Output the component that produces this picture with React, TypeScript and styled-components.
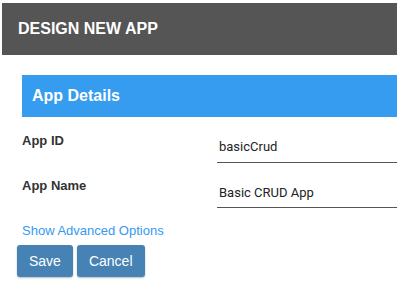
import styled, { createGlobalStyle } from "styled-components";

const GlobalStyle = createGlobalStyle`
  html, body {
    margin: 0;
    padding: 0;
    background: #ffffff;
    font-family: "Liberation Sans", Arial, sans-serif;
  }
  * {
    box-sizing: border-box;
  }
`;

const Page = styled.div`
  padding: 3px 0 8px 2px;
`;

const TopBar = styled.header`
  height: 52px;
  background-color: #555555;
  display: flex;
  align-items: center;
  padding-left: 16px;

  & h1 {
    margin: 0;
    font-size: 16px;
    font-weight: bold;
    color: #ffffff;
  }
`;

const Content = styled.main`
  padding: 20px 0 0 20px;
`;

const SectionBar = styled.div`
  height: 42px;
  background-color: #359cf0;
  display: flex;
  align-items: center;
  padding-left: 10px;
  margin-bottom: 13px;

  & h2 {
    margin: 0;
    font-size: 16px;
    font-weight: bold;
    color: #ffffff;
  }
`;

const FieldRow = styled.div`
  display: flex;
  align-items: flex-start;
  height: 45px;
`;

const FieldLabel = styled.label`
  width: 195px;
  padding-top: 3px;
  font-size: 13px;
  font-weight: bold;
  color: #333333;
`;

const TextInput = styled.input<{ $offset?: number }>`
  width: 180px;
  margin-top: ${(p) => 5 + (p.$offset ?? 0)}px;
  padding: 4px 2px ${(p) => 8 - (p.$offset ?? 0)}px;
  border: none;
  border-bottom: 1px solid #555555;
  outline: none;
  font-family: Roboto, "Liberation Sans", sans-serif;
  font-size: 13px;
  color: #222222;
  background: transparent;
`;

const AdvancedLink = styled.a`
  display: block;
  margin-top: 3px;
  font-size: 13px;
  color: #3399f3;
  text-decoration: none;
  cursor: pointer;
`;

const Actions = styled.div`
  display: flex;
  gap: 4px;
  margin: 7px 0 0 -5px;
`;

const Button = styled.button`
  height: 32px;
  padding: 0 12px;
  border: none;
  border-radius: 3px;
  background-color: #4682b4;
  color: #ffffff;
  font-family: "Liberation Sans", Arial, sans-serif;
  font-size: 14px;
  box-shadow: 0 1px 2px rgba(0, 0, 0, 0.25);
  cursor: pointer;
`;

export default function App() {
  return (
    <>
      <GlobalStyle />
      <Page>
        <TopBar>
          <h1>DESIGN NEW APP</h1>
        </TopBar>
        <Content>
          <SectionBar>
            <h2>App Details</h2>
          </SectionBar>
          <FieldRow>
            <FieldLabel>App ID</FieldLabel>
            <TextInput defaultValue="basicCrud" />
          </FieldRow>
          <FieldRow>
            <FieldLabel>App Name</FieldLabel>
            <TextInput defaultValue="Basic CRUD App" $offset={1} />
          </FieldRow>
          <AdvancedLink>Show Advanced Options</AdvancedLink>
          <Actions>
            <Button>Save</Button>
            <Button>Cancel</Button>
          </Actions>
        </Content>
      </Page>
    </>
  );
}
